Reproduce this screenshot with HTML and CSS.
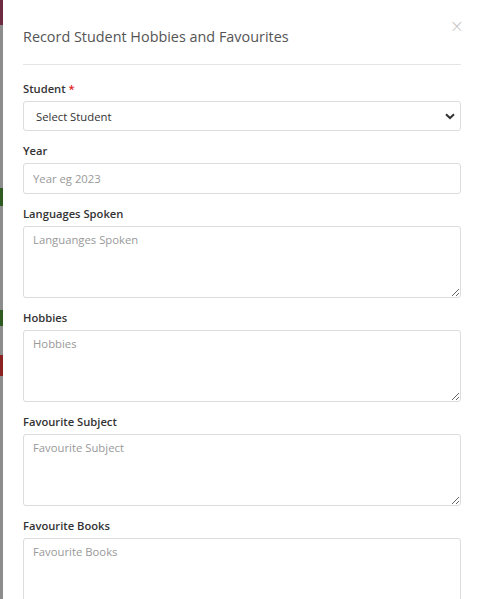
FILE: index.html
```html
<!DOCTYPE html>
<html>
<head>
<meta charset="utf-8">
<link rel="stylesheet" href="styles.css">
</head>
<body>
<div class="page">
  <div class="backdrop">
    <div class="seg seg-maroon"></div>
    <div class="seg seg-gap1"></div>
    <div class="seg seg-green1"></div>
    <div class="seg seg-gap2"></div>
    <div class="seg seg-green2"></div>
    <div class="seg seg-gap3"></div>
    <div class="seg seg-red"></div>
  </div>
  <div class="modal">
    <div class="modal-header">
      <h4 class="modal-title">Record Student Hobbies and Favourites</h4>
      <span class="close">&times;</span>
    </div>
    <div class="modal-body">
      <div class="group">
        <label class="label">Student <span class="req">*</span></label>
        <div class="select-wrap">
          <select class="control select">
            <option>Select Student</option>
          </select>
          <svg class="chev" width="10" height="7" viewBox="0 0 10 7"><path d="M1 1.2 L5 5 L9 1.2" fill="none" stroke="#333" stroke-width="2"/></svg>
        </div>
      </div>
      <div class="group">
        <label class="label">Year</label>
        <input class="control text" type="text" placeholder="Year eg 2023">
      </div>
      <div class="group">
        <label class="label">Languages Spoken</label>
        <textarea class="control area" placeholder="Languanges Spoken"></textarea>
      </div>
      <div class="group">
        <label class="label">Hobbies</label>
        <textarea class="control area" placeholder="Hobbies"></textarea>
      </div>
      <div class="group">
        <label class="label">Favourite Subject</label>
        <textarea class="control area" placeholder="Favourite Subject"></textarea>
      </div>
      <div class="group">
        <label class="label">Favourite Books</label>
        <textarea class="control area" placeholder="Favourite Books"></textarea>
      </div>
    </div>
  </div>
</div>
</body>
</html>
```

FILE: styles.css
```css
html, body {
  margin: 0;
  padding: 0;
  height: 100%;
  overflow: hidden;
  background: #fff;
  font-family: "Open Sans", "Noto Sans", sans-serif;
}
.page {
  display: flex;
  height: 100%;
}
.backdrop {
  width: 3px;
  flex: none;
  background: #8c8c8c;
  display: flex;
  flex-direction: column;
}
.seg { flex: none; }
.seg-maroon { height: 25px; background: #6e2a41; }
.seg-gap1 { height: 163px; }
.seg-green1 { height: 18px; background: #2f5a22; }
.seg-gap2 { height: 104px; }
.seg-green2 { height: 16px; background: #2f5a22; }
.seg-gap3 { height: 29px; }
.seg-red { height: 21px; background: #8a2222; }
.modal {
  flex: 1;
  background: #fff;
  padding: 0 18px 0 20px;
  overflow: hidden;
}
.modal-header {
  position: relative;
  padding: 26px 0 17px;
  border-bottom: 1px solid #e5e5e5;
}
.modal-title {
  margin: 0;
  font-size: 14.4px;
  line-height: 21px;
  font-weight: 400;
  color: #555;
}
.close {
  position: absolute;
  right: -3px;
  top: 16px;
  font-size: 17px;
  line-height: 20px;
  color: #c4c4c4;
  font-family: "DejaVu Sans", sans-serif;
  font-weight: 300;
}
.modal-body {
  padding-top: 16px;
}
.group {
  margin-bottom: 12px;
}
.label {
  display: block;
  font-size: 11.2px;
  line-height: 16px;
  font-weight: 600;
  color: #333;
  margin-bottom: 4px;
}
.req { color: #e02020; }
.control {
  display: block;
  box-sizing: border-box;
  width: 100%;
  height: 30px;
  border: 1px solid #dcdcdc;
  border-radius: 3px;
  padding: 0 9px;
  font-family: "Open Sans", "Noto Sans", sans-serif;
  font-size: 11.3px;
  color: #444;
  background: #fff;
  outline: none;
  margin: 0;
}
.text { height: 31px; }
.control::placeholder { color: #999; }
.select-wrap { position: relative; }
.select {
  appearance: none;
  -webkit-appearance: none;
  padding-left: 12px;
  color: #333;
}
.chev {
  position: absolute;
  right: 6px;
  top: 12px;
}
.area {
  height: 72px;
  padding: 5px 9px;
  resize: vertical;
  line-height: 16px;
}
```
